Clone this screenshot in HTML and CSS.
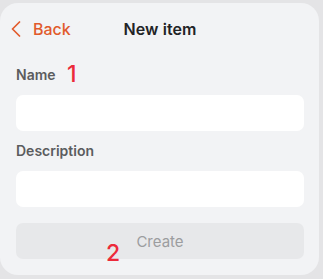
FILE: index.html
```html
<!DOCTYPE html>
<html>
<head>
<meta charset="utf-8">
<link rel="stylesheet" href="styles.css">
</head>
<body>
<div class="card">
  <div class="header">
    <a class="back">
      <svg class="chev" width="10" height="16" viewBox="0 0 10 16"><path d="M8.5 1 L1.5 8 L8.5 15" fill="none" stroke="#e15a2c" stroke-width="1.7" stroke-linecap="round" stroke-linejoin="round"/></svg>
      <span>Back</span>
    </a>
    <div class="title">New item</div>
    <div></div>
  </div>
  <div class="field">
    <label class="label">Name<span class="mark mark-1">1</span></label>
    <div class="input"></div>
  </div>
  <div class="field">
    <label class="label">Description</label>
    <div class="input"></div>
  </div>
  <button class="create">Create<span class="mark mark-2">2</span></button>
</div>
</body>
</html>
```

FILE: styles.css
```css
html, body {
  margin: 0;
  padding: 0;
  background: #e4e4e6;
  font-family: Inter, "Noto Sans", sans-serif;
}
.card {
  margin-top: 3px;
  width: 319px;
  height: 272px;
  box-sizing: border-box;
  background: #f2f3f5;
  border-radius: 18px;
  padding: 10px 15px 16px 16px;
  display: flex;
  flex-direction: column;
}
.header {
  height: 32px;
  display: grid;
  grid-template-columns: 1fr auto 1fr;
  align-items: center;
  margin-bottom: 20px;
}
.back {
  display: flex;
  align-items: center;
  gap: 12px;
  margin-left: -5px;
  color: #e15a2c;
  font-size: 16px;
  font-weight: 500;
}
.chev { display: block; }
.title {
  font-size: 16px;
  font-weight: 600;
  color: #222326;
  text-align: center;
  letter-spacing: 0.1px;
}
.field {
  display: flex;
  flex-direction: column;
  margin-bottom: 10px;
}
.label {
  position: relative;
  font-size: 14px;
  font-weight: 600;
  line-height: 20px;
  color: #5b5c5e;
  margin-bottom: 10px;
}
.input {
  height: 36px;
  background: #ffffff;
  border-radius: 7px;
}
.create {
  position: relative;
  margin-top: 6px;
  height: 36px;
  border: none;
  border-radius: 7px;
  background: #e7e8ea;
  color: #9c9d9f;
  font-family: Inter, "Noto Sans", sans-serif;
  font-size: 15px;
  font-weight: 400;
  padding: 0;
}
.mark {
  position: absolute;
  color: #ec2a3a;
  font-size: 23px;
  font-weight: 500;
  line-height: 23px;
}
.mark-1 { left: 51px; top: -2px; }
.mark-2 { left: 90px; top: 19px; }
```
